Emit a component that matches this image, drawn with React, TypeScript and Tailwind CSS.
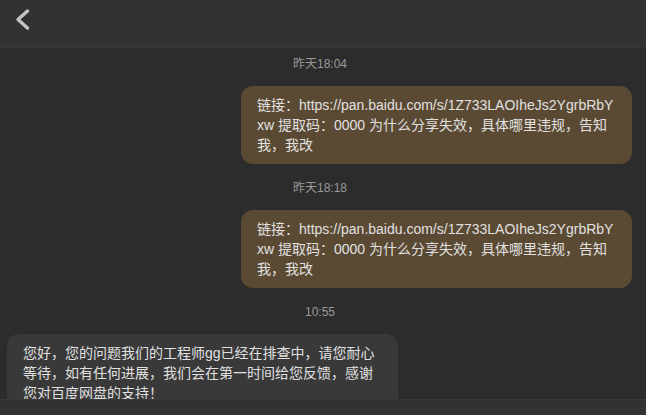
const FONT = '"Liberation Sans", "Noto Sans CJK SC", sans-serif';

type Message = {
  time: string;
  text: string;
  mine: boolean;
};

const LINK_TEXT =
  "链接：https://pan.baidu.com/s/1Z733LAOIheJs2YgrbRbYxw 提取码：0000 为什么分享失效，具体哪里违规，告知我，我改";

const messages: Message[] = [
  { time: "昨天18:04", text: LINK_TEXT, mine: true },
  { time: "昨天18:18", text: LINK_TEXT, mine: true },
  {
    time: "10:55",
    text: "您好，您的问题我们的工程师gg已经在排查中，请您耐心等待，如有任何进展，我们会在第一时间给您反馈，感谢您对百度网盘的支持！",
    mine: false,
  },
];

function BackIcon() {
  return (
    <svg width="18" height="24" viewBox="0 0 18 24" fill="none">
      <path
        d="M13.5 3 L4 11.5 L13.5 20"
        stroke="#c4c4c4"
        strokeWidth="3.4"
        strokeLinecap="round"
        strokeLinejoin="round"
      />
    </svg>
  );
}

export default function App() {
  return (
    <div
      className="flex h-[415px] w-[646px] flex-col overflow-hidden bg-[#2c2c2c]"
      style={{ fontFamily: FONT }}
    >
      {/* Title bar */}
      <div className="flex h-[48px] shrink-0 items-start border-b border-[#383838] bg-[#323232] pl-[14px] pt-[8px]">
        <BackIcon />
      </div>

      {/* Conversation */}
      <div className="flex min-h-0 flex-1 flex-col overflow-hidden pt-[7px]">
        {messages.map((message, index) => (
          <div key={index} className="flex flex-col">
            <div
              className={`pr-[6px] text-center text-[12px] leading-[18px] text-[#9a9a9a] ${
                index === 0 ? "" : "mt-[15px]"
              }`}
            >
              {message.time}
            </div>
            <div
              className={`mt-[13px] flex ${
                message.mine ? "justify-end pr-[14px]" : "justify-start pl-[7px]"
              }`}
            >
              <div
                className={`w-[391px] shrink-0 rounded-[12px] px-[16px] py-[9px] text-[14px] leading-[20px] break-all text-[#e0e0e0] ${
                  message.mine ? "bg-[#5b4a33]" : "bg-[#393939]"
                }`}
              >
                {message.text}
              </div>
            </div>
          </div>
        ))}
      </div>

      {/* Input bar */}
      <div className="h-[16px] shrink-0 border-t border-[#3a3a3a] bg-[#323232]" />
    </div>
  );
}
